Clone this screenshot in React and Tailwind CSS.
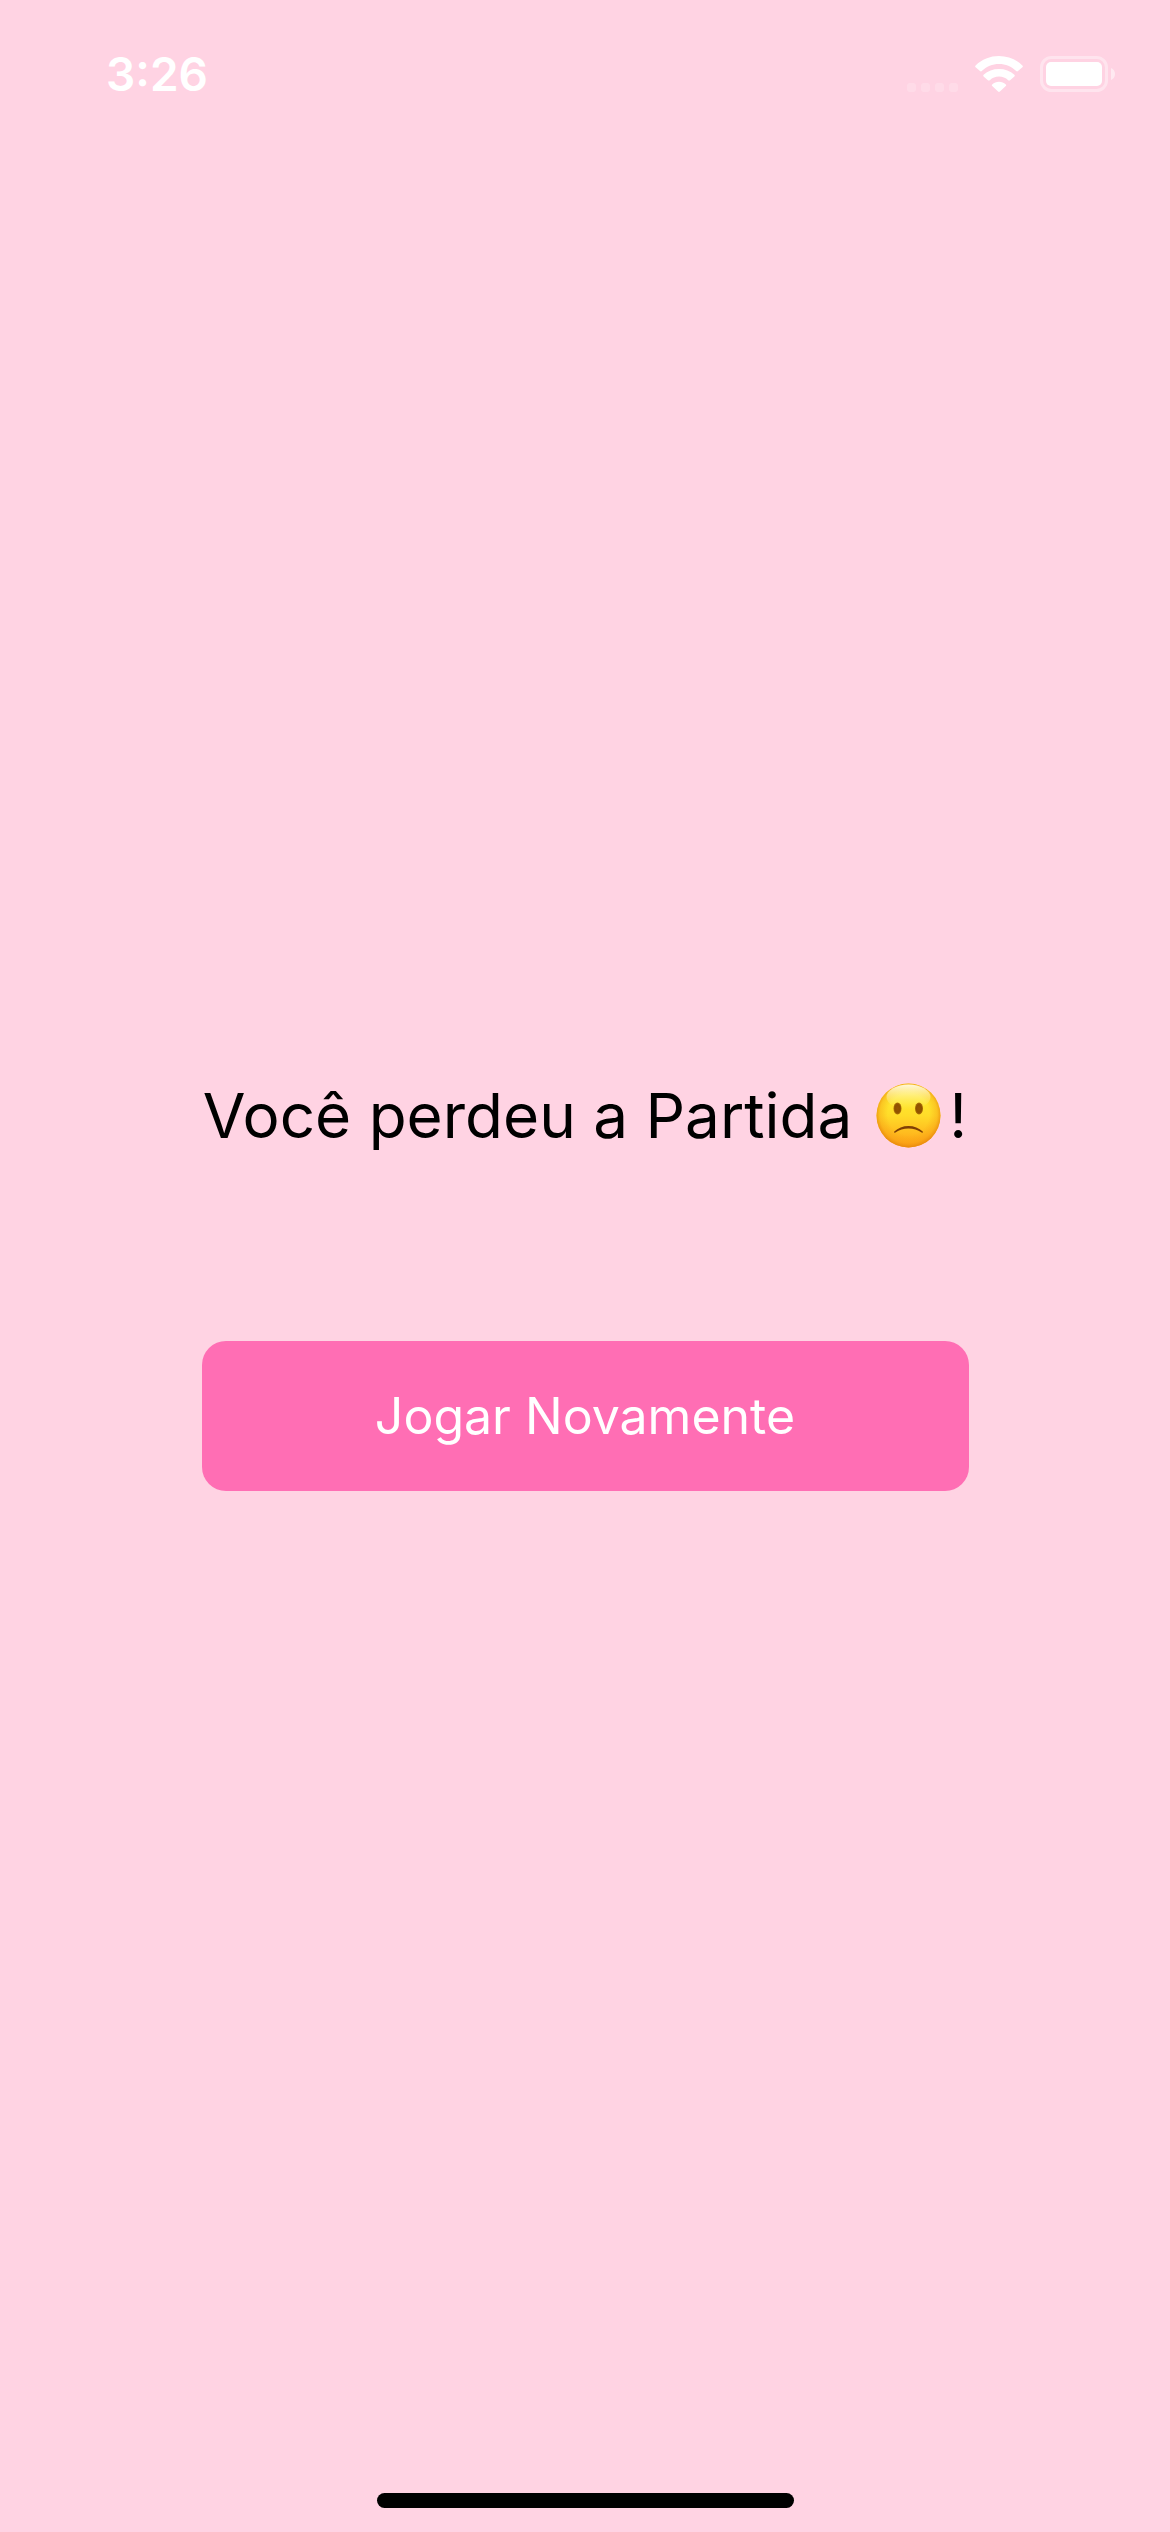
function CellularDots() {
  return (
    <div className="flex gap-[5px]" aria-hidden="true">
      <span className="size-[9px] rounded-[3px] bg-white/20" />
      <span className="size-[9px] rounded-[3px] bg-white/20" />
      <span className="size-[9px] rounded-[3px] bg-white/20" />
      <span className="size-[9px] rounded-[3px] bg-white/20" />
    </div>
  );
}

function WifiIcon() {
  return (
    <svg className="h-9 w-12" viewBox="0 0 48 36" fill="#fff" aria-hidden="true">
      <path d="M24 8c6.500 0 12.600 2.500 17.200 7 .5.500 1.300.500 1.800 0l4.400-3.700c.6-.5.6-1.300 0-1.900C41.200 3.400 32.900 0 24 0S6.800 3.400.6 9.400c-.6.600-.6 1.400 0 1.900L5 15c.500.500 1.300.500 1.800 0C11.400 10.500 17.500 8 24 8z" />
      <path d="M24 20.600c3.500 0 6.700 1.300 9.200 3.600.6.500 1.400.500 1.900 0l4.300-3.800c.5-.5.500-1.200 0-1.700C35.300 15 29.900 13 24 13s-11.300 2-15.400 5.700c-.5.500-.5 1.200 0 1.700l4.300 3.800c.5.500 1.300.500 1.900 0 2.500-2.300 5.700-3.600 9.200-3.600z" />
      <path d="M24.900 35.600l5.900-5.600c.5-.5.500-1.200 0-1.600C28.900 26.700 26.600 25.700 24 25.700s-4.900 1-6.800 2.700c-.5.400-.5 1.100 0 1.600l5.900 5.600c.5.500 1.300.500 1.800 0z" />
    </svg>
  );
}

function BatteryIcon() {
  return (
    <svg className="h-9 w-[75px]" viewBox="0 0 75 36" aria-hidden="true">
      <rect x="1.500" y="1.500" width="65" height="33" rx="10" fill="none" stroke="#fff" strokeOpacity=".4" strokeWidth="3" />
      <rect x="6" y="6" width="56" height="24" rx="5" fill="#fff" />
      <path d="M71 12c2.500 1 4 3.300 4 6s-1.500 5-4 6z" fill="#fff" fillOpacity=".5" />
    </svg>
  );
}

function FrowningFace() {
  return (
    <svg className="size-[65px]" viewBox="0 0 65 65" role="img" aria-label="🙁">
      <defs>
        <linearGradient id="skin" x1="0" y1="0" x2="0" y2="1">
          <stop offset="0" stopColor="#ffe234" />
          <stop offset=".3" stopColor="#ffe62e" />
          <stop offset=".5" stopColor="#ffdc29" />
          <stop offset=".75" stopColor="#ffbe20" />
          <stop offset="1" stopColor="#ffa114" />
        </linearGradient>
        <radialGradient id="rim" cx=".5" cy=".48" r=".52">
          <stop offset=".62" stopColor="#f59a12" stopOpacity="0" />
          <stop offset=".86" stopColor="#f59a12" stopOpacity=".4" />
          <stop offset="1" stopColor="#e5860c" stopOpacity=".9" />
        </radialGradient>
        <linearGradient id="shine" x1="0" y1="0" x2="0" y2="1">
          <stop offset="0" stopColor="#fffbe6" stopOpacity=".95" />
          <stop offset="1" stopColor="#fff27a" stopOpacity="0" />
        </linearGradient>
        <radialGradient id="eye">
          <stop offset="0" stopColor="#985700" />
          <stop offset=".65" stopColor="#8f5100" />
          <stop offset="1" stopColor="#ae7205" />
        </radialGradient>
      </defs>
      <circle cx="32.500" cy="32.500" r="32" fill="url(#skin)" />
      <circle cx="32.500" cy="32.500" r="32" fill="url(#rim)" />
      <ellipse cx="32.500" cy="14" rx="22" ry="12.500" fill="url(#shine)" />
      <ellipse cx="21.500" cy="25.500" rx="4" ry="6" fill="url(#eye)" />
      <ellipse cx="43" cy="25.500" rx="4" ry="6" fill="url(#eye)" />
      <path d="M18.300 48.600C22 45 27 43 32.500 43s10.500 2 14.200 5.600c.8.800-.1 1.500-1.100 1C41.600 47.200 37.500 45.600 32.500 45.600s-9.100 1.600-13.100 4c-1 .5-1.900-.2-1.100-1z" fill="#7f3f05" />
    </svg>
  );
}

export default function App() {
  return (
    <div className="flex min-h-screen flex-col bg-[#ffd3e3] font-['Inter','Liberation_Sans',sans-serif]">
      <header className="flex items-start justify-between pt-14 pr-[55px] pl-[106px] text-white">
        <time className="text-[46px] leading-9 font-semibold">3:26</time>
        <div className="flex items-end gap-[17px]">
          <CellularDots />
          <WifiIcon />
          <BatteryIcon />
        </div>
      </header>

      <main className="mx-auto flex w-full max-w-[767px] flex-1 flex-col items-center justify-center gap-[186px] pb-[18px]">
        <h1 className="flex items-center text-[62px] leading-[78px] whitespace-nowrap text-black">
          <span className="mr-6">Você perdeu a Partida</span>
          <FrowningFace />
          <span className="ml-2">!</span>
        </h1>
        <button type="button" className="w-full rounded-3xl bg-[#ff6eb4] py-11 text-[50px] leading-[62px] text-white">
          Jogar Novamente
        </button>
      </main>

      <footer className="flex justify-center pb-6">
        <div className="h-[15px] w-[417px] rounded-full bg-black" />
      </footer>
    </div>
  );
}
